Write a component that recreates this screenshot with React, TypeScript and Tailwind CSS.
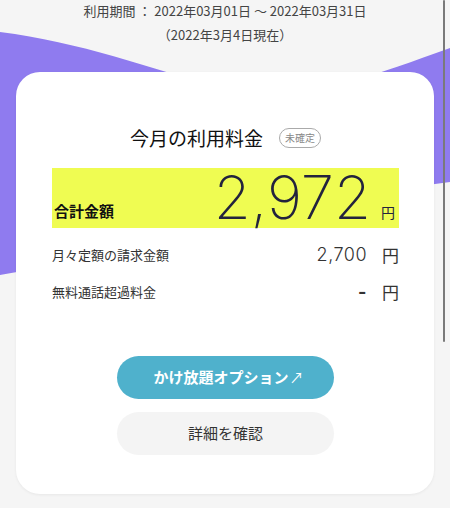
import React from "react";

const jp = "font-['Noto_Sans_CJK_JP',sans-serif]";
const num = "font-['Inter','Noto_Sans_CJK_JP',sans-serif]";

function Row({ label, value, bold }: { label: string; value: string; bold?: boolean }) {
  return (
    <div className="flex items-center justify-between h-[37px]">
      <span className="text-[13px] text-[#333]">{label}</span>
      <div className="flex items-center gap-[15px]">
        <span className={`${num} text-[18px] text-[#333] tracking-[0.5px] ${bold ? "font-bold" : "font-light"}`}>{value}</span>
        <span className="text-[17px] text-[#333] leading-none">円</span>
      </div>
    </div>
  );
}

export default function App() {
  return (
    <div className={`relative h-[508px] w-[450px] overflow-hidden bg-[#f5f5f5] ${jp}`}>
      {/* purple wave behind the card */}
      <svg className="absolute inset-0" width="450" height="508" viewBox="0 0 450 508">
        <path
          d="M0 32 C80 42 150 68 220 88 C290 106 350 84 450 48 L450 182 C300 200 150 250 0 275 Z"
          fill="#8f7bef"
        />
      </svg>
      {/* scrollbar thumb */}
      <div className="absolute right-[5px] top-0 h-[342px] w-[2px] bg-[#7a7a7a] rounded-full" />

      <div className="relative flex flex-col items-center">
        <div className="text-[13px] leading-[24px] text-[#444] text-center -mt-px">
          <p>利用期間 ： 2022年03月01日 〜 2022年03月31日</p>
          <p>（2022年3月4日現在）</p>
        </div>

        <div className="mt-[25px] w-[418px] rounded-[24px] bg-white shadow-[0_1px_3px_rgba(0,0,0,0.06)] pt-[52px] pb-[39px] pl-[36px] pr-[35px]">
          <div className="flex items-center justify-center gap-4 h-[28px]">
            <h2 className="text-[19px] text-[#111]">今月の利用料金</h2>
            <span className="rounded-full border border-[#aaa] px-[5px] h-[20px] leading-[18px] text-[10px] text-[#888]">
              未確定
            </span>
          </div>

          <div className="mt-4 h-[60px] bg-[#effc52] flex items-end justify-between pl-[2px] pr-[4px] pb-[8px]">
            <span className="text-[15px] font-bold text-[#111] leading-none mb-[2px]">合計金額</span>
            <div className="flex items-end gap-[10px]">
              <span className={`${num} text-[60px] font-extralight leading-[46px] text-[#23233d]`}>
                2,972
              </span>
              <span className="text-[14px] text-[#23233d] leading-none mb-[1px]">円</span>
            </div>
          </div>

          <div className="mt-[8px]">
            <Row label="月々定額の請求金額" value="2,700" />
            <Row label="無料通話超過料金" value="-" bold />
          </div>

          <div className="mt-[46px] flex flex-col items-center gap-[13px]">
            <button className="w-[217px] h-[43px] rounded-full bg-[#4fb1cc] text-white text-[15px] font-bold flex items-center justify-center pl-[6px]">
              かけ放題オプション<span className="font-normal text-[14px] ml-[1px]">↗</span>
            </button>
            <button className="w-[217px] h-[43px] rounded-full bg-[#f4f4f4] text-[#333] text-[15px] flex items-center justify-center">
              詳細を確認
            </button>
          </div>
        </div>
      </div>
    </div>
  );
}
